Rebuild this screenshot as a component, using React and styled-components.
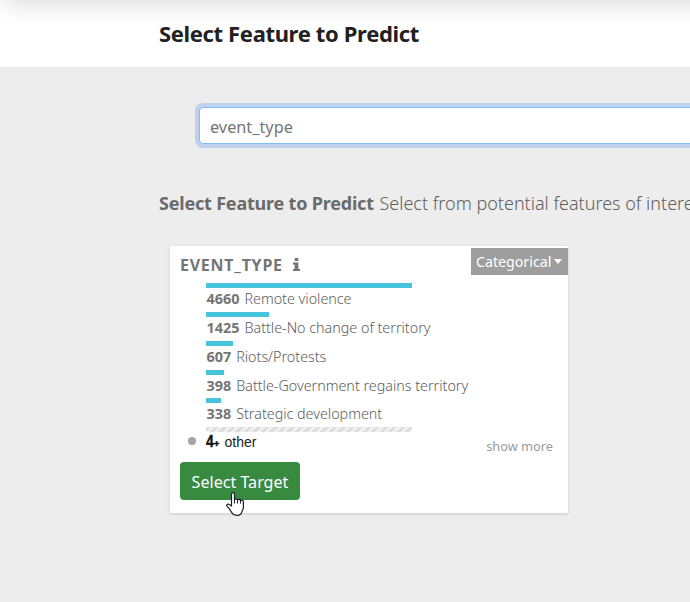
import React from "react";
import styled, { createGlobalStyle } from "styled-components";

const GlobalStyle = createGlobalStyle`
  *, *::before, *::after { box-sizing: border-box; }
  html, body { margin: 0; height: 100%; overflow: hidden; background: #ededed; }
  body { font-family: "Noto Sans", "Open Sans", sans-serif; color: #212529; }
`;

const Page = styled.div`
  position: relative;
  width: 100%;
  height: 602px;
  overflow: hidden;
  background: #ededed;
`;

const Header = styled.header`
  position: relative;
  display: flex;
  align-items: center;
  height: 67px;
  padding: 0 0 2px 159px;
  background: #fff;
  overflow: hidden;

  &::before {
    content: "";
    position: absolute;
    top: -40px;
    left: 6px;
    right: -60px;
    height: 40px;
    box-shadow: 0 5px 22px rgba(0, 0, 0, 0.14);
  }
`;

const Title = styled.h1`
  margin: 0;
  font-size: 22px;
  line-height: 30px;
  font-weight: 700;
  letter-spacing: -0.35px;
  color: #212121;
  white-space: nowrap;
`;

const Main = styled.main`
  display: flex;
  flex-direction: column;
  padding: 40px 0 0 159px;
`;

const SearchInput = styled.input`
  width: 540px;
  height: 37px;
  margin-left: 40px;
  padding: 2px 10px 0;
  border: 1px solid #80bdff;
  border-radius: 4px;
  outline: none;
  box-shadow: 0 0 0 4px #bfd1ee;
  background: #fff;
  color: #757575;
  font: 400 16.3px/24px "Noto Sans", sans-serif;
`;

const Intro = styled.p`
  margin: 46px 0 0;
  font-size: 18px;
  line-height: 26px;
  font-weight: 300;
  color: #606060;
  white-space: nowrap;
`;

const IntroLead = styled.strong`
  margin-right: 1px;
  font-weight: 700;
  letter-spacing: -0.2px;
  color: #6a6a6a;
`;

const Card = styled.section`
  display: flex;
  flex-direction: column;
  width: 398px;
  height: 267px;
  margin: 30px 0 0 11px;
  background: #fff;
  box-shadow: 0 1px 3px rgba(0, 0, 0, 0.15);
`;

const CardHeader = styled.div`
  display: flex;
  justify-content: space-between;
  height: 37px;
  padding: 2px 0 0 10px;
`;

const FeatureName = styled.div`
  display: flex;
  align-items: center;
  gap: 10px;
  height: 34px;
  font-size: 16px;
  font-weight: 700;
  letter-spacing: 0.75px;
  color: #757575;
`;

const InfoSvg = styled.svg`
  display: block;
  width: 7px;
  height: 13px;
  margin-bottom: 1px;
  fill: #757575;
`;

const TypeBadge = styled.button`
  display: flex;
  align-items: center;
  gap: 3px;
  width: 97px;
  height: 27px;
  padding: 0 0 0 5px;
  border: 0;
  background: #9e9e9e;
  color: #fff;
  font: 400 14.2px/21px "Noto Sans", sans-serif;
`;

const Caret = styled.span`
  border: 4.5px solid transparent;
  border-top: 5px solid #fff;
  border-bottom: 0;
`;

const Facets = styled.div`
  display: flex;
  flex-direction: column;
  padding-left: 36px;
`;

const Facet = styled.div`
  height: 29px;

  &:nth-child(4) {
    height: 28px;
  }
`;

const Bar = styled.div`
  width: ${(p) => p.$width}px;
  height: 5px;
  background: ${(p) =>
    p.$striped
      ? "repeating-linear-gradient(135deg, #ddd 0 3px, #f0f0f0 3px 6px)"
      : "#46c4dc"};
`;

const FacetText = styled.div`
  display: flex;
  align-items: baseline;
  gap: 5px;
  height: 21px;
  padding-left: 0.5px;
  line-height: 21.4px;
  font-size: 14.3px;
  font-weight: 300;
  color: #5c5c5c;
  white-space: nowrap;
`;

const Count = styled.span`
  font-size: 14.4px;
  font-weight: 700;
  color: #757575;
`;

const CardFooter = styled.div`
  display: flex;
  height: 29px;
  padding: 0 15px 0 18px;
`;

const Dot = styled.span`
  width: 8px;
  height: 8px;
  margin-top: 4.5px;
  border-radius: 50%;
  background: #a3a5a7;
`;

const OtherLabel = styled.div`
  display: flex;
  align-items: baseline;
  flex: 1;
  margin: -1px 0 0 10px;
  font: 14px/21px "Liberation Sans", Arial, sans-serif;
  color: #1a1b1c;
`;

const OtherCount = styled.strong`
  display: flex;
  align-items: baseline;
  width: 18.5px;
  height: 21px;
  font: 700 17px/21px "Liberation Sans", Arial, sans-serif;
  color: #111;
`;

const Digit = styled.span`
  width: 8px;
  transform: scaleX(0.82);
  transform-origin: left;
  -webkit-text-stroke: 0.4px #111;
`;

const Plus = styled.small`
  font-size: 9px;
  line-height: 12px;
  -webkit-text-stroke: 0.5px #111;
`;

const ShowMore = styled.a`
  margin-top: 4px;
  font-size: 12.8px;
  line-height: 20px;
  color: #9a9a9a;
`;

const TargetButton = styled.button`
  width: 120px;
  height: 38px;
  margin: 1px 0 0 10px;
  padding: 2px 0 0;
  border: 0;
  border-radius: 4px;
  background: #388a40;
  color: #fff;
  font: 400 16.1px/24px "Noto Sans", sans-serif;
`;

const Pointer = styled.svg`
  position: absolute;
  left: 226px;
  top: 492px;
  width: 19px;
  height: 24px;
`;

const facets = [
  { count: 4660, label: "Remote violence", width: 206 },
  { count: 1425, label: "Battle-No change of territory", width: 63 },
  { count: 607, label: "Riots/Protests", width: 27 },
  { count: 398, label: "Battle-Government regains territory", width: 18 },
  { count: 338, label: "Strategic development", width: 15 },
];

export default function App() {
  return (
    <Page>
      <GlobalStyle />
      <Header>
        <Title>Select Feature to Predict</Title>
      </Header>
      <Main>
        <SearchInput defaultValue="event_type" aria-label="Search features" />
        <Intro>
          <IntroLead>Select Feature to Predict</IntroLead> Select from potential features of interest
        </Intro>
        <Card>
          <CardHeader>
            <FeatureName>
              EVENT_TYPE
              <InfoSvg viewBox="0 0 7 13">
                <path d="M1.700 0h3.600v3H1.700zM0 4.500h5.400V11H7v2H0v-2h1.600V6.500H0z" />
              </InfoSvg>
            </FeatureName>
            <TypeBadge>
              Categorical
              <Caret />
            </TypeBadge>
          </CardHeader>
          <Facets>
            {facets.map((f) => (
              <Facet key={f.label}>
                <Bar $width={f.width} />
                <FacetText>
                  <Count>{f.count}</Count>
                  {f.label}
                </FacetText>
              </Facet>
            ))}
            <Bar $width={206} $striped />
          </Facets>
          <CardFooter>
            <Dot />
            <OtherLabel>
              <OtherCount>
                <Digit>4</Digit>
                <Plus>+</Plus>
              </OtherCount>
              other
            </OtherLabel>
            <ShowMore>show more</ShowMore>
          </CardFooter>
          <TargetButton>Select Target</TargetButton>
        </Card>
      </Main>
      <Pointer viewBox="0 0 19 24">
        <path
          d="M5.500 14V2.200C5.500.2 8.500.2 8.500 2.200V8c0-1.500 3-1.500 3 .3 0-1.300 3-1.200 3 .5 0-1.200 2.900-1 2.900.9V15c0 2.200-1 3.200-1.500 4.800-.6 2.500-2.500 3.500-5 3.500s-4.300-1-5.400-3C4.400 18 3 16.300 1.100 14.200c-1.100-1.500.7-2.800 2.200-1.700z"
          fill="#fff"
          stroke="#1b1b2b"
          strokeWidth="1.2"
          strokeLinejoin="round"
        />
        <path d="M8.500 7.500v4M11.500 8v3.500M14.500 8.500v3" stroke="#1b1b2b" strokeWidth="1" fill="none" />
      </Pointer>
    </Page>
  );
}
